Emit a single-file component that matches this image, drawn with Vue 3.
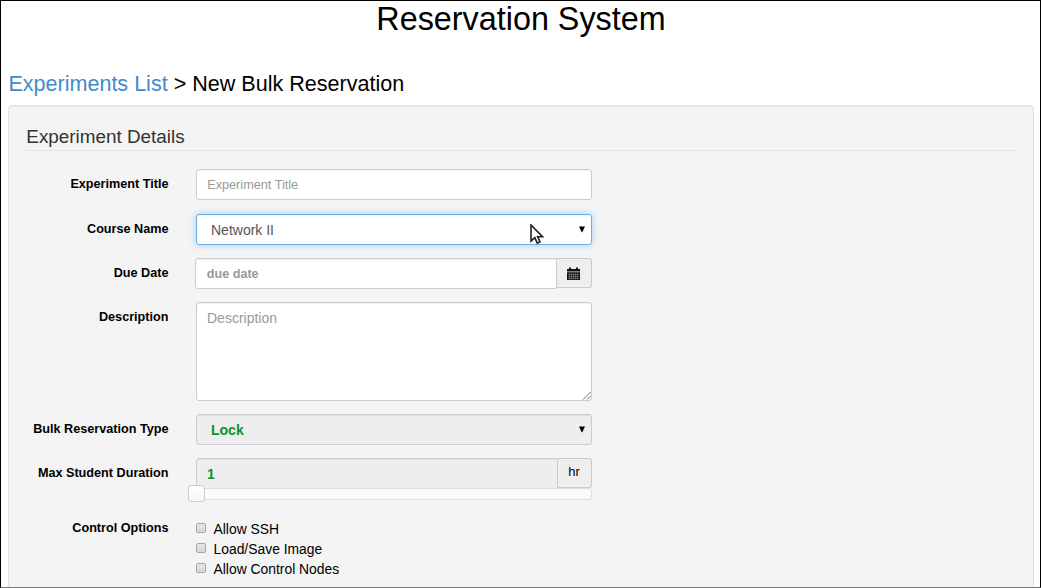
<script setup>
const options = ['Allow SSH', 'Load/Save Image', 'Allow Control Nodes']
</script>

<template>
  <main class="page">
    <h1 class="title">Reservation System</h1>
    <h2 class="crumbs"><a class="link">Experiments List</a> &gt; New Bulk Reservation</h2>

    <section class="panel">
      <h3 class="legend">Experiment Details</h3>

      <div class="row row-title">
        <label class="label">Experiment Title</label>
        <div class="field small">Experiment Title</div>
      </div>

      <div class="row">
        <label class="label">Course Name</label>
        <div class="field select focused">
          <span>Network II</span>
          <svg class="caret" width="6" height="7" viewBox="0 0 6 7"><path d="M0 .5h6L3.3 6.3H2.7z" /></svg>
          <svg class="pointer" width="14" height="21" viewBox="0 0 14 21">
            <path d="M1 1v16.2l3.8-3.5 2.5 5.4 2.7-1.2-2.4-5.2h4.9z" />
          </svg>
        </div>
      </div>

      <div class="row">
        <label class="label">Due Date</label>
        <div class="group date">
          <div class="field small bold joined">due date</div>
          <div class="addon addon-date">
            <svg width="13" height="14" viewBox="0 0 13 14">
              <path class="ink" d="M0 2h2V.5h2V2h5V.5h2V2h2v2.4H0zM0 5.2h13V13H0z" />
              <path class="grid" d="M1 7.5h11M1 9.5h11M1 11.5h11M2.5 6v6.5M4.5 6v6.5M6.5 6v6.5M8.5 6v6.5M10.5 6v6.5" />
            </svg>
          </div>
        </div>
      </div>

      <div class="row row-area">
        <label class="label">Description</label>
        <div class="field area">
          Description
          <svg class="grip" width="9" height="9" viewBox="0 0 9 9"><path d="M1 8.5L8.5 1M5 8.5L8.5 5" /></svg>
        </div>
      </div>

      <div class="row">
        <label class="label">Bulk Reservation Type</label>
        <div class="field select locked">
          <span>Lock</span>
          <svg class="caret" width="6" height="7" viewBox="0 0 6 7"><path d="M0 .5h6L3.3 6.3H2.7z" /></svg>
        </div>
      </div>

      <div class="row row-duration">
        <label class="label">Max Student Duration</label>
        <div class="duration">
          <div class="group">
            <div class="field locked joined">1</div>
            <div class="addon addon-hr">hr</div>
          </div>
          <div class="track"><i class="handle"></i></div>
        </div>
      </div>

      <div class="row row-options">
        <label class="label">Control Options</label>
        <div class="options">
          <div v-for="o in options" :key="o" class="option"><i class="box"></i><span>{{ o }}</span></div>
        </div>
      </div>
    </section>
  </main>
</template>

<style>
body { margin: 0; overflow: hidden; }
</style>

<style scoped>
* { box-sizing: border-box; }
.page {
  width: 1041px;
  height: 588px;
  overflow: hidden;
  border: 1px solid #000;
  border-bottom-color: #777;
  padding: 0 6px 0 7px;
  background: #fff;
  color: #000;
  font: 14px/20px "Liberation Sans", Arial, sans-serif;
}
.title { margin: 0; height: 72px; font-size: 32.35px; font-weight: 400; line-height: 36px; text-align: center; }
.crumbs { margin: 0; height: 32px; padding-left: .4px; font-size: 21.56px; font-weight: 400; line-height: 22px; white-space: nowrap; }
.link { color: #428bca; }
.panel {
  height: 600px;
  padding: 20px 17px;
  border: 1px solid #e3e3e3;
  border-radius: 4px;
  background: #f4f4f4;
  box-shadow: inset 0 1px 1px rgba(0, 0, 0, .05);
}
.legend { margin: 0 0 18px; height: 25px; padding-left: .3px; border-bottom: 1px solid #e5e5e5; color: #333; font-size: 18.87px; font-weight: 400; line-height: 22px; }
.row { display: grid; grid-template-columns: 142.5px 396px; column-gap: 27.5px; height: 44px; }
.row-title { height: 45px; }
.row-area { height: 112px; }
.row-duration { height: 61px; }
.label { font-size: 12.65px; font-weight: 700; line-height: 30px; text-align: right; white-space: nowrap; }
.field {
  height: 31px;
  padding: 0 11px;
  border: 1px solid #ccc;
  border-radius: 3px;
  background: #fff;
  color: #999;
  font-size: 14px;
  line-height: 29px;
  box-shadow: inset 0 1px 1px rgba(0, 0, 0, .06);
}
.small { font-size: 12.7px; padding-left: 10.2px; line-height: 31px; }
.bold { font-size: 12.6px; font-weight: 700; padding-left: 10.8px; }
.select { position: relative; display: flex; align-items: flex-start; justify-content: space-between; padding: 0 6px 0 14px; line-height: 31px; color: #555; }
.caret { margin-top: 11px; fill: #000; }
.focused { border-color: #66afe9; box-shadow: inset 0 1px 1px rgba(0, 0, 0, .06), 0 0 7px rgba(102, 175, 233, .55); }
.pointer { position: absolute; left: 332.5px; top: 9px; fill: #fff; stroke: #222; stroke-width: 1.6; }
.locked { background: #eee; color: #07952a; font-weight: 700; line-height: 31px; }
.locked.joined { padding-left: 10px; }
.group { display: flex; }
.date { margin-left: -1px; }
.joined { flex: 1; border-radius: 3px 0 0 3px; }
.addon { display: flex; align-items: center; justify-content: center; height: 30px; border: 1px solid #ccc; border-left: 0; border-radius: 0 3px 3px 0; background: #eee; }
.addon-date { width: 35px; padding: 1px 1px 0 0; }
.ink { fill: #111; }
.grid { stroke: #999; stroke-width: .5; fill: none; }
.addon-hr { width: 34px; font-size: 13px; padding: 0 1px 2px 0; }
.area { position: relative; height: 99px; line-height: 31px; padding-left: 10px; }
.grip { position: absolute; right: 0; bottom: 0; stroke: #555; stroke-width: .9; fill: none; }
.track { position: relative; height: 12px; margin-top: -1px; border: 1px solid #ddd; border-radius: 3px; background: #fafafa; }
.handle { position: absolute; left: -9px; top: -4px; width: 17px; height: 17px; border: 1px solid #ccc; border-radius: 3px; background: linear-gradient(#fff, #f5f5f5); }
.row-options .label { line-height: 18px; }
.options { font-size: 13.88px; line-height: 20px; }
.option { display: flex; height: 20px; gap: 7.5px; }
.box { width: 10px; height: 10px; margin-top: 4px; border: 1px solid #a6a6a6; border-radius: 2px; background: linear-gradient(#e8e8e8, #d6d6d6); }
</style>
